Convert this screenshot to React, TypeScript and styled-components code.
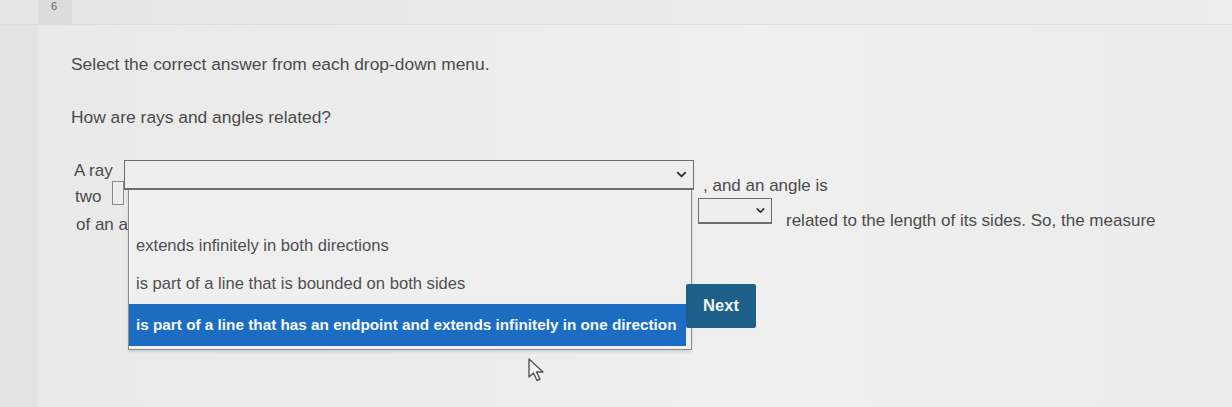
import React from "react";
import styled, { createGlobalStyle } from "styled-components";
import { ChevronDown } from "lucide-react";

const GlobalStyle = createGlobalStyle`
  html, body {
    margin: 0;
    padding: 0;
    background: #e3e3e3;
  }
  body {
    font-family: "Liberation Sans", Arial, sans-serif;
    color: #4a4a4a;
  }
`;

const Page = styled.div`
  position: relative;
  width: 1232px;
  height: 407px;
  overflow: hidden;
  background: #e3e3e3;
`;

const TopStrip = styled.div`
  height: 24px;
  display: flex;
  background: linear-gradient(to right, #e6e6e6, #ededed);
  border-bottom: 1px solid #dedede;
`;

const Tab = styled.div`
  margin-left: 38px;
  width: 34px;
  background: #dcdcdc;
  font-size: 11px;
  color: #666;
  padding-left: 13px;
  box-sizing: border-box;
  line-height: 12px;
`;

const Sheet = styled.div`
  margin-left: 38px;
  height: 382px;
  background: linear-gradient(to right, #e9e9e9, #efefef 60%, #ececec);
  padding-left: 33px;
  padding-top: 30px;
  box-sizing: border-box;
`;

const Prompt = styled.div<{ $gap?: number }>`
  font-size: 17.4px;
  line-height: 18px;
  margin-top: ${(p) => p.$gap ?? 0}px;
  color: #4b4b4b;
`;

const Sentence = styled.div`
  position: relative;
  margin-top: 34px;
  font-size: 17px;
  color: #4b4b4b;
`;

const Line = styled.div<{ $top?: number }>`
  display: flex;
  align-items: flex-start;
  margin-top: ${(p) => p.$top ?? 0}px;
`;

const Word = styled.span<{ $width?: number; $pad?: number; $lift?: number }>`
  display: inline-block;
  width: ${(p) => (p.$width ? `${p.$width}px` : "auto")};
  padding-left: ${(p) => p.$pad ?? 0}px;
  padding-top: ${(p) => p.$lift ?? 0}px;
  line-height: 18px;
  white-space: nowrap;
`;

const SelectBox = styled.div<{ $w: number; $h: number }>`
  width: ${(p) => p.$w}px;
  height: ${(p) => p.$h}px;
  box-sizing: border-box;
  border: 1px solid #6d6d6d;
  border-bottom-width: 2px;
  background: #eeeeee;
  display: flex;
  align-items: center;
  justify-content: flex-end;
  padding-right: 4px;
  color: #333;
`;

const StubBox = styled.div`
  width: 12px;
  height: 24px;
  box-sizing: border-box;
  border: 1px solid #8a8a8a;
  background: #ededed;
`;

const RightGroup = styled.div`
  display: flex;
  align-items: flex-start;
  margin-left: 574px;
  padding-top: 17px;
  gap: 14px;
`;

const List = styled.div`
  position: absolute;
  left: 57px;
  top: 30px;
  width: 562px;
  background: #efefef;
  border: 1px solid #8c8c8c;
  border-top: none;
  box-shadow: 0 2px 3px rgba(0, 0, 0, 0.12);
  z-index: 2;
`;

const Option = styled.div<{ $h: number; $active?: boolean }>`
  height: ${(p) => p.$h}px;
  display: flex;
  align-items: center;
  padding-left: 7px;
  margin-right: ${(p) => (p.$active ? 5 : 0)}px;
  font-size: ${(p) => (p.$active ? 15.3 : 16.6)}px;
  white-space: nowrap;
  background: ${(p) => (p.$active ? "#1c6cc2" : "transparent")};
  color: ${(p) => (p.$active ? "#f4f8ff" : "#505050")};
  font-weight: ${(p) => (p.$active ? 700 : 400)};
`;

const NextRow = styled.div`
  margin-top: 50px;
  padding-left: 615px;
`;

const NextButton = styled.button`
  position: relative;
  z-index: 3;
  width: 70px;
  height: 44px;
  border: none;
  border-radius: 2px;
  background: #1d5f88;
  color: #f2f6fa;
  font-family: "Liberation Sans", Arial, sans-serif;
  font-weight: 700;
  font-size: 16.5px;
  padding: 0 0 2px;
`;

const Cursor = styled.svg`
  position: absolute;
  left: 526px;
  top: 357px;
  z-index: 4;
`;

const App: React.FC = () => {
  return (
    <Page>
      <GlobalStyle />
      <TopStrip>
        <Tab>6</Tab>
      </TopStrip>
      <Sheet>
        <Prompt>Select the correct answer from each drop-down menu.</Prompt>
        <Prompt $gap={35}>How are rays and angles related?</Prompt>
        <Sentence>
          <Line>
            <Word $width={50} $pad={3} $lift={2}>
              A ray
            </Word>
            <SelectBox $w={570} $h={30}>
              <ChevronDown size={15} strokeWidth={3} />
            </SelectBox>
            <Word $pad={9} $lift={17}>
              , and an angle is
            </Word>
          </Line>
          <Line $top={-14}>
            <Word $width={37} $pad={4} $lift={7}>
              two
            </Word>
            <StubBox />
            <RightGroup>
              <SelectBox $w={74} $h={26}>
                <ChevronDown size={13} strokeWidth={3} />
              </SelectBox>
              <Word $lift={14}>related to the length of its sides. So, the measure</Word>
            </RightGroup>
          </Line>
          <Line $top={-14}>
            <Word $pad={5}>of an a</Word>
          </Line>
          <List>
            <Option $h={37} />
            <Option $h={37}>extends infinitely in both directions</Option>
            <Option $h={40}>is part of a line that is bounded on both sides</Option>
            <Option $h={42} $active>
              is part of a line that has an endpoint and extends infinitely in one direction
            </Option>
            <Option $h={3} />
          </List>
          <NextRow>
            <NextButton>Next</NextButton>
          </NextRow>
        </Sentence>
      </Sheet>
      <Cursor width="22" height="26" viewBox="0 0 22 26">
        <path
          d="M3 2 L3 20 L7.5 16 L11 23.5 L14 22 L10.5 15 L17 15 Z"
          fill="#f4f4f4"
          stroke="#555"
          strokeWidth="1.4"
          strokeLinejoin="round"
        />
      </Cursor>
    </Page>
  );
};

export default App;
